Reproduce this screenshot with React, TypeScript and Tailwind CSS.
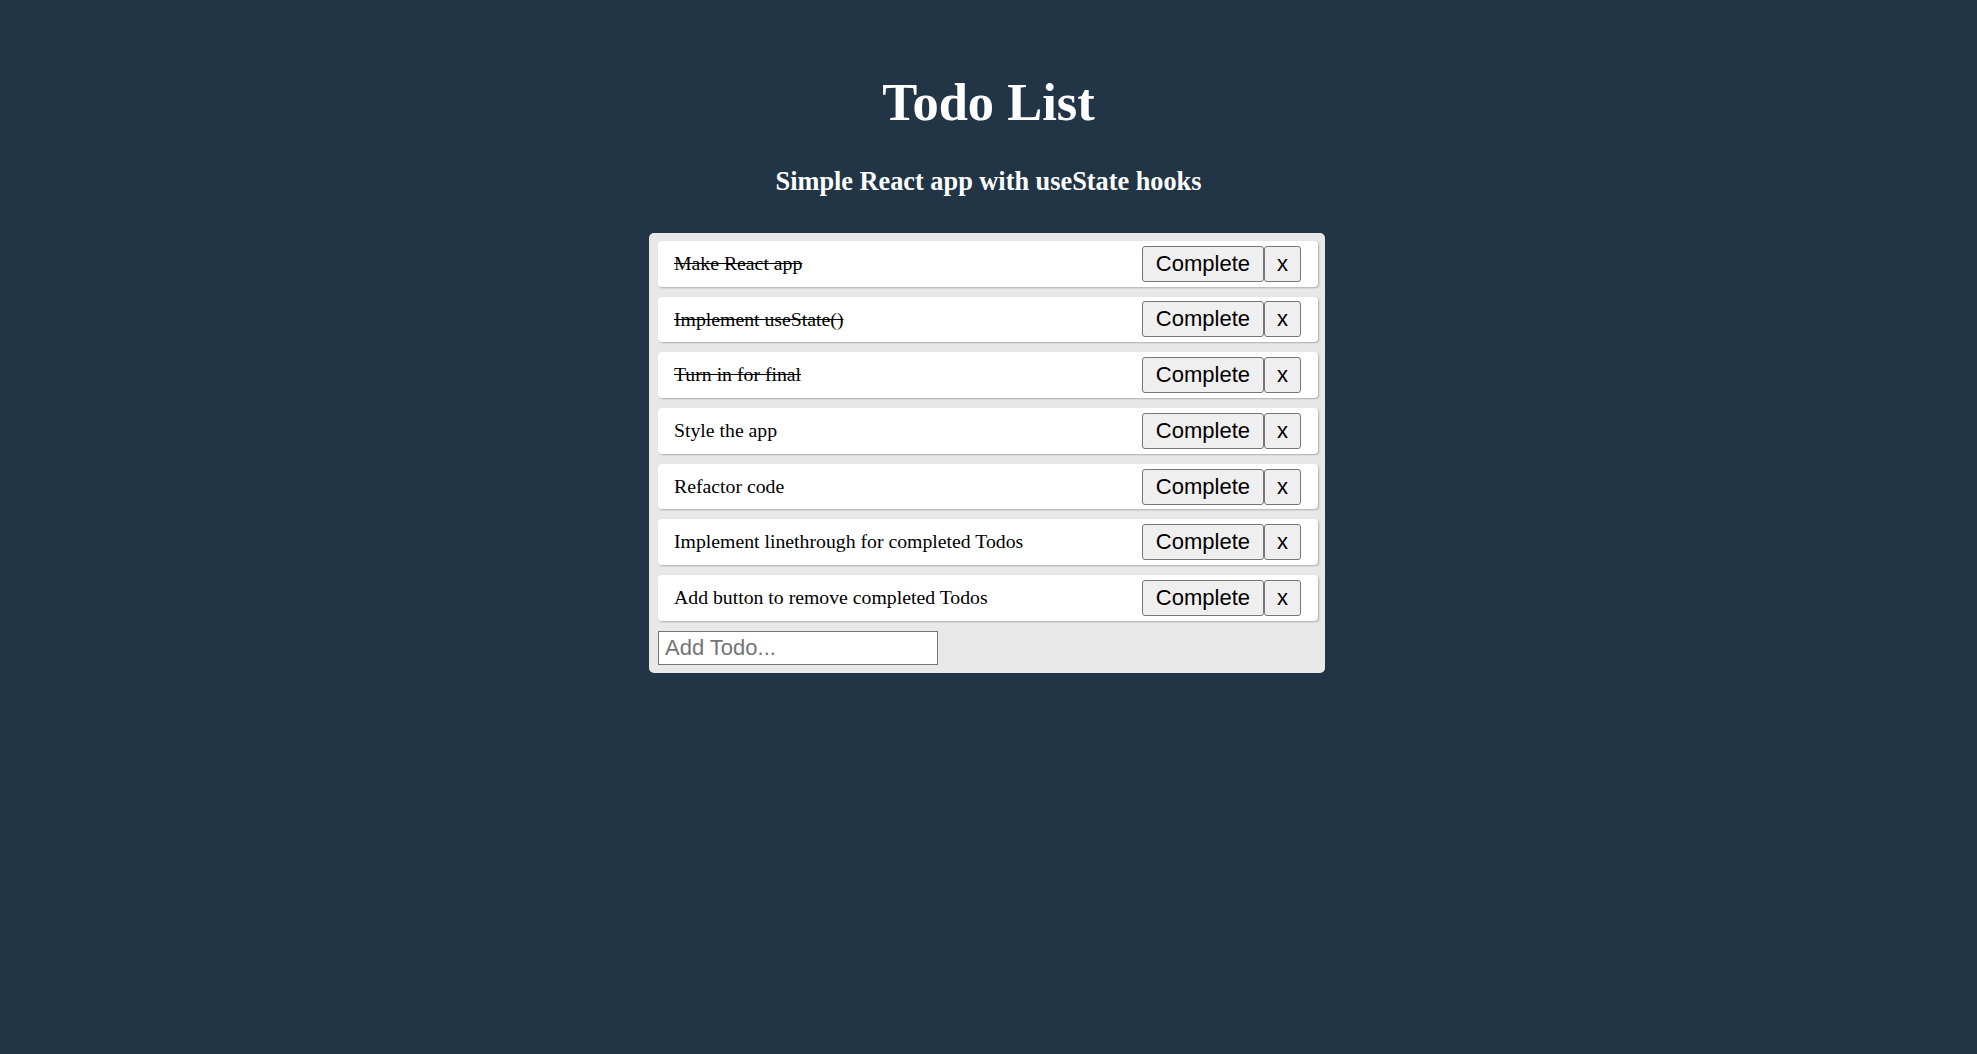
import React, { useState } from "react";

type Todo = { text: string; isCompleted: boolean };

const initialTodos: Todo[] = [
  { text: "Make React app", isCompleted: true },
  { text: "Implement useState()", isCompleted: true },
  { text: "Turn in for final", isCompleted: true },
  { text: "Style the app", isCompleted: false },
  { text: "Refactor code", isCompleted: false },
  { text: "Implement linethrough for completed Todos", isCompleted: false },
  { text: "Add button to remove completed Todos", isCompleted: false },
];

function TodoRow({
  todo,
  index,
  completeTodo,
  removeTodo,
}: {
  todo: Todo;
  index: number;
  completeTodo: (i: number) => void;
  removeTodo: (i: number) => void;
}) {
  return (
    <div className="flex items-center justify-between h-[45.5px] mb-[10.2px] pl-[16px] pr-[17px] bg-white rounded-[4px] shadow-[1px_1px_2px_rgba(0,0,0,0.25)]">
      <span
        className={`text-[19.75px] text-black font-['Liberation_Serif',serif] ${todo.isCompleted ? "line-through" : ""}`}
      >
        {todo.text}
      </span>
      <div className="flex">
        <button
          onClick={() => completeTodo(index)}
          className="h-[36px] px-[13px] bg-[#efefef] border border-[#767676] rounded-[3px] text-[22px] text-black font-['Liberation_Sans',Arial,sans-serif] leading-none"
        >
          Complete
        </button>
        <button
          onClick={() => removeTodo(index)}
          className="h-[36px] px-[12px] bg-[#efefef] border border-[#767676] rounded-[3px] text-[22px] text-black font-['Liberation_Sans',Arial,sans-serif] leading-none"
        >
          x
        </button>
      </div>
    </div>
  );
}

export default function App() {
  const [todos, setTodos] = useState<Todo[]>(initialTodos);
  const [value, setValue] = useState("");

  const completeTodo = (i: number) => {
    const next = [...todos];
    next[i] = { ...next[i], isCompleted: true };
    setTodos(next);
  };

  const removeTodo = (i: number) => {
    const next = [...todos];
    next.splice(i, 1);
    setTodos(next);
  };

  const handleSubmit = (e: React.FormEvent) => {
    e.preventDefault();
    if (!value) return;
    setTodos([...todos, { text: value, isCompleted: false }]);
    setValue("");
  };

  return (
    <div className="min-h-screen bg-[#213547] flex flex-col items-center font-['Liberation_Serif',serif]">
      <h1 className="mt-[72px] text-[52.5px] leading-[60px] font-bold text-white">Todo List</h1>
      <h3 className="mt-[35px] text-[26.3px] leading-[30px] font-bold text-white">
        Simple React app with useState hooks
      </h3>
      <div className="mt-[36px] mr-[3px] w-[676px] pt-[8px] pb-[8px] pl-[9px] pr-[7px] bg-[#e8e8e8] rounded-[5px]">
        {todos.map((todo, index) => (
          <TodoRow
            key={index}
            index={index}
            todo={todo}
            completeTodo={completeTodo}
            removeTodo={removeTodo}
          />
        ))}
        <form onSubmit={handleSubmit} className="flex">
          <input
            type="text"
            value={value}
            onChange={(e) => setValue(e.target.value)}
            placeholder="Add Todo..."
            className="w-[280px] h-[34.5px] px-[6px] bg-white border border-[#767676] text-[22px] text-black placeholder:text-[#757575] font-['Liberation_Sans',Arial,sans-serif] outline-none"
          />
        </form>
      </div>
    </div>
  );
}
